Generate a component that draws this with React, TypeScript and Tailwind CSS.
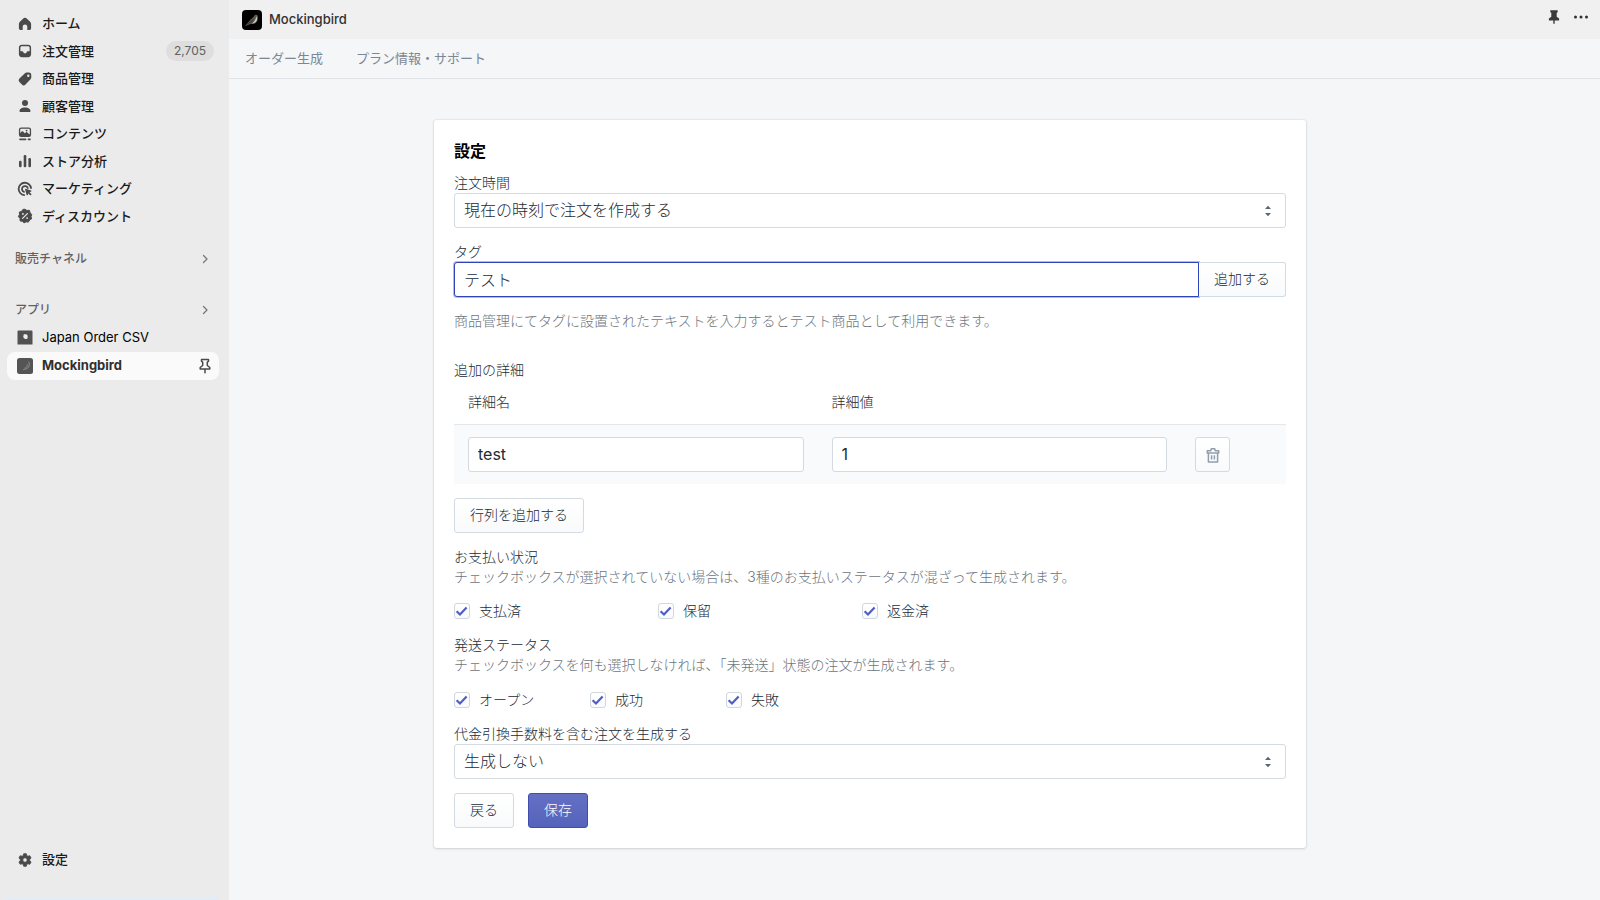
import { useState } from "react";
import type { ReactNode } from "react";

const fieldClass =
    "h-[35px] w-full rounded-[3px] border border-[#d3dae1] bg-white px-[9px] pb-0.5 text-base text-[#212b36] outline-none";
const buttonClass =
    "h-[35px] rounded-[3px] border border-[#d3dae1] bg-linear-to-b from-white to-[#f9fafb] text-sm text-[#212b36]";

const menu = [
    { label: "ホーム", icon: <HomeIcon /> },
    { label: "注文管理", icon: <OrderIcon />, count: "2,705" },
    { label: "商品管理", icon: <ProductIcon /> },
    { label: "顧客管理", icon: <PersonIcon /> },
    { label: "コンテンツ", icon: <ContentIcon /> },
    { label: "ストア分析", icon: <ChartIcon /> },
    { label: "マーケティング", icon: <TargetIcon /> },
    { label: "ディスカウント", icon: <DiscountIcon /> },
];

function App() {
    return (
        <div className="flex min-h-screen bg-[#f4f6f8] font-['Inter','Noto_Sans_CJK_JP',sans-serif] text-[#212b36]">
            <Sidebar />
            <div className="flex min-w-0 grow flex-col">
                <TopBar />
                <nav className="flex h-10 items-center gap-[33px] border-b border-[#dfe3e8] px-4 text-[13px] text-[#7b8794]">
                    <a href="#orders">オーダー生成</a>
                    <a href="#plan">プラン情報・サポート</a>
                </nav>
                <main className="mt-[41px] mr-8 mb-8 ml-[205px] max-w-[872px]">
                    <SettingsCard />
                </main>
            </div>
        </div>
    );
}

function Sidebar() {
    return (
        <aside className="sticky top-0 flex h-screen w-[229px] shrink-0 flex-col bg-[#ebebeb] text-[13px] font-medium text-[#1a1a1a]">
            <ul className="mt-2.5 grid h-[220px] grid-rows-8">
                {menu.map((item) => (
                    <li key={item.label} className="flex">
                        <a href="#menu" className="flex grow items-center gap-2 pr-[15px] pl-4">
                            {item.icon}
                            <span className="grow">{item.label}</span>
                            {item.count && (
                                <span className="rounded-full bg-[#dedede] px-2 text-xs leading-5 font-normal text-[#616161]">
                                    {item.count}
                                </span>
                            )}
                        </a>
                    </li>
                ))}
            </ul>
            <SectionButton className="mt-[15px]">販売チャネル</SectionButton>
            <SectionButton className="mt-[23px]">アプリ</SectionButton>
            <a href="#csv" className="flex h-7 items-center gap-2 pl-4 font-normal text-black">
                <CsvIcon />
                Japan Order CSV
            </a>
            <a
                href="#mockingbird"
                className="mr-2.5 ml-[7px] flex h-7 items-center gap-2 rounded-lg bg-[#fafafa] pr-1.5 pl-[9px] font-bold text-[#303030]"
            >
                <BirdTile />
                <span className="grow">Mockingbird</span>
                <PinOutlineIcon />
            </a>
            <a href="#settings" className="mt-auto mb-6 flex h-7 items-center gap-2 pl-4">
                <GearIcon />
                設定
            </a>
            <div className="mr-2.5 ml-1.5 h-0.5 rounded-t-lg bg-[#e0ecf8]"></div>
        </aside>
    );
}

function SectionButton({ className, children }: { className: string; children: ReactNode }) {
    return (
        <button
            className={`flex h-7 shrink-0 items-center justify-between pr-[19px] pl-[15px] text-xs text-[#616161] ${className}`}
        >
            {children}
            <svg viewBox="0 0 10 10" className="h-2.5 w-2.5" fill="none" stroke="#777" strokeWidth="1.3">
                <path d="M3.5 1.5L7 5L3.5 8.5" strokeLinecap="round" strokeLinejoin="round" />
            </svg>
        </button>
    );
}

function TopBar() {
    return (
        <header className="flex h-[39px] items-center bg-[#f0f0f0] pr-[11px] pl-[13px] text-[13px] font-medium text-[#303030]">
            <BirdLogo />
            <span className="ml-[7px] grow">Mockingbird</span>
            <button aria-label="Pin" className="mr-[11px] mb-1.5">
                <PinIcon />
            </button>
            <button aria-label="More" className="mb-1.5">
                <DotsIcon />
            </button>
        </header>
    );
}

function SettingsCard() {
    const [tag, setTag] = useState("テスト");
    const [rows, setRows] = useState([{ name: "test", value: "1" }]);

    const update = (index: number, key: "name" | "value", text: string) => {
        setRows(rows.map((row, i) => (i === index ? { ...row, [key]: text } : row)));
    };

    return (
        <form
            onSubmit={(e) => e.preventDefault()}
            className="rounded-[3px] bg-white p-5 text-sm leading-5 font-light shadow-[0_0_0_1px_rgba(63,63,68,0.06),0_1px_3px_0_rgba(63,63,68,0.15)]"
        >
            <h2 className="mb-[11px] text-base leading-[22px] font-bold text-black">設定</h2>

            <label htmlFor="time" className="block">注文時間</label>
            <Select id="time" options={["現在の時刻で注文を作成する"]} />

            <label htmlFor="tag" className="mt-3.5 block">タグ</label>
            <div className="flex">
                <input
                    id="tag"
                    type="text"
                    value={tag}
                    onChange={(e) => setTag(e.target.value)}
                    className="h-[35px] min-w-0 grow rounded-l-[3px] border border-[#2f43bd] bg-white px-[9px] pb-0.5 text-base text-[#212b36] shadow-[0_0_0_1px_rgba(92,106,196,0.45)] outline-none"
                />
                <button className="h-[35px] rounded-r-[3px] border border-l-0 border-[#d3dae1] bg-linear-to-b from-white to-[#f9fafb] px-[15px] pb-0.5 text-sm">
                    追加する
                </button>
            </div>
            <p className="mt-3.5 text-[#6c757e]">
                商品管理にてタグに設置されたテキストを入力するとテスト商品として利用できます。
            </p>

            <h3 className="mt-[29px]">追加の詳細</h3>
            <table className="w-full table-fixed">
                <thead>
                    <tr className="border-b border-[#e4e7eb] text-left">
                        <th className="px-3.5 py-3 font-light">詳細名</th>
                        <th className="px-3.5 py-3 font-light">詳細値</th>
                        <th className="w-[105px]"></th>
                    </tr>
                </thead>
                <tbody>
                    {rows.map((row, index) => (
                        <tr key={index} className="bg-[#f9fafc]">
                            <td className="px-3.5 py-3">
                                <input
                                    type="text"
                                    aria-label="詳細名"
                                    value={row.name}
                                    onChange={(e) => update(index, "name", e.target.value)}
                                    className={`${fieldClass} block font-normal`}
                                />
                            </td>
                            <td className="px-3.5 py-3">
                                <input
                                    type="text"
                                    aria-label="詳細値"
                                    value={row.value}
                                    onChange={(e) => update(index, "value", e.target.value)}
                                    className={`${fieldClass} block font-normal`}
                                />
                            </td>
                            <td className="px-3.5 py-3">
                                <button
                                    type="button"
                                    aria-label="削除"
                                    onClick={() => setRows(rows.filter((_, i) => i !== index))}
                                    className={`${buttonClass} flex w-[35px] items-center justify-center`}
                                >
                                    <TrashIcon />
                                </button>
                            </td>
                        </tr>
                    ))}
                </tbody>
            </table>
            <button
                type="button"
                onClick={() => setRows([...rows, { name: "", value: "" }])}
                className={`${buttonClass} mt-3.5 block px-[15px] pb-0.5`}
            >
                行列を追加する
            </button>

            <h3 className="mt-3.5">お支払い状況</h3>
            <p className="text-[#6c757e]">
                チェックボックスが選択されていない場合は、3種のお支払いステータスが混ざって生成されます。
            </p>
            <div className="mt-3.5 mr-4 grid grid-cols-4">
                <Checkbox label="支払済" />
                <Checkbox label="保留" />
                <Checkbox label="返金済" />
            </div>

            <h3 className="mt-3.5">発送ステータス</h3>
            <p className="text-[#6c757e]">
                チェックボックスを何も選択しなければ、「未発送」状態の注文が生成されます。
            </p>
            <div className="mt-[15px] mr-4 grid grid-cols-6">
                <Checkbox label="オープン" />
                <Checkbox label="成功" />
                <Checkbox label="失敗" />
            </div>

            <label htmlFor="fee" className="mt-3.5 block">代金引換手数料を含む注文を生成する</label>
            <Select id="fee" options={["生成しない"]} />

            <div className="mt-3.5 flex gap-3.5">
                <button type="button" className={`${buttonClass} px-[15px] pb-0.5`}>戻る</button>
                <button className="h-[35px] rounded-[3px] border border-[#3f4eae] bg-linear-to-b from-[#6570c4] to-[#5563bb] px-[15px] pb-0.5 text-sm text-white">
                    保存
                </button>
            </div>
        </form>
    );
}

function Select({ id, options }: { id: string; options: string[] }) {
    return (
        <div className="relative">
            <select id={id} className={`${fieldClass} block appearance-none`}>
                {options.map((option) => (
                    <option key={option}>{option}</option>
                ))}
            </select>
            <svg viewBox="0 0 8 12" className="pointer-events-none absolute top-3 right-3.5 h-3 w-2" fill="#5a6773">
                <path d="M1 4L4 0.8L7 4Z M1 8L4 11.2L7 8Z" />
            </svg>
        </div>
    );
}

function Checkbox({ label }: { label: string }) {
    return (
        <label className="flex items-center gap-[9px]">
            <span className="relative flex">
                <input
                    type="checkbox"
                    defaultChecked
                    className="peer h-4 w-4 appearance-none rounded-[3px] border border-[#d0d7de] bg-linear-to-b from-white to-[#f9fafb]"
                />
                <svg
                    viewBox="0 0 16 16"
                    className="pointer-events-none absolute inset-0 hidden h-4 w-4 peer-checked:block"
                    fill="none"
                    stroke="#4f5ec4"
                    strokeWidth="2.2"
                >
                    <path d="M2.6 8.2L6 11.5L12.6 4.6" />
                </svg>
            </span>
            {label}
        </label>
    );
}

function Icon({ children }: { children: ReactNode }) {
    return (
        <svg viewBox="0 0 18 18" className="h-[18px] w-[18px] shrink-0" fill="#4a4a4a">
            {children}
        </svg>
    );
}

function HomeIcon() {
    return (
        <Icon>
            <path d="M7.9 3.1a1.7 1.7 0 0 1 2.2 0l3.8 3.3c.8.7 1.2 1.6 1.2 2.6v4.3c0 1-.7 1.7-1.7 1.7h-2.1v-3.2a2.3 2.3 0 0 0-4.6 0V15H4.6c-1 0-1.7-.7-1.7-1.7V9c0-1 .4-1.9 1.2-2.6z" />
        </Icon>
    );
}

function OrderIcon() {
    return (
        <Icon>
            <path
                fillRule="evenodd"
                d="M6 2.800h6a3.100 3.100 0 0 1 3.100 3.100v6.200a3.100 3.100 0 0 1-3.100 3.100H6a3.100 3.100 0 0 1-3.100-3.100v-6.200a3.100 3.100 0 0 1 3.100-3.100zM6 4.300c-1 0-1.600.7-1.600 1.600v3.400h2c.4 0 .7.200.9.600l.5 1c.1.200.3.300.5.300h1.400c.2 0 .4-.1.500-.3l.5-1c.2-.4.500-.6.900-.6h2V5.900c0-.9-.6-1.600-1.600-1.600z"
            />
        </Icon>
    );
}

function ProductIcon() {
    return (
        <Icon>
            <path
                fillRule="evenodd"
                d="M8.700 3.400c.6-.5 1.200-.8 2-.8h2.200a2.400 2.400 0 0 1 2.400 2.400v2.300c0 .7-.3 1.400-.8 1.900l-5 5.300a2.500 2.500 0 0 1-3.600 0L3.400 12a2.500 2.500 0 0 1 0-3.500zM12.300 6.900a1.200 1.200 0 1 0 0-2.400a1.200 1.200 0 0 0 0 2.400z"
            />
        </Icon>
    );
}

function PersonIcon() {
    return (
        <Icon>
            <circle cx="9" cy="6" r="3" />
            <path d="M3.5 14c0-2.200 2.400-3.600 5.500-3.600s5.500 1.400 5.500 3.600c0 .7-.5 1.100-1.200 1.100H4.700c-.7 0-1.200-.4-1.200-1.100z" />
        </Icon>
    );
}

function ContentIcon() {
    return (
        <Icon>
            <path
                fillRule="evenodd"
                d="M5.200 2.500h7.600a2.300 2.300 0 0 1 2.300 2.300v4.900a2.300 2.300 0 0 1-2.300 2.300H5.200a2.300 2.300 0 0 1-2.300-2.300V4.800a2.300 2.300 0 0 1 2.300-2.300zM5.400 3.800c-.7 0-1.200.5-1.200 1.200v2.900l1.500-1.300c.4-.4 1-.4 1.400 0l1.700 1.700 1-.9c.5-.4 1-.4 1.500 0l2.500 2V5c0-.7-.5-1.200-1.200-1.200z"
            />
            <circle cx="10.6" cy="5.6" r="0.9" />
            <rect x="3.2" y="13.6" width="7.2" height="1.7" rx="0.8" />
            <rect x="11.6" y="13.600" width="3.200" height="1.700" rx="0.800" />
        </Icon>
    );
}

function ChartIcon() {
    return (
        <Icon>
            <rect x="3" y="8.8" width="2.6" height="6.4" rx="1.2" />
            <rect x="7.7" y="3" width="2.6" height="12.2" rx="1.2" />
            <rect x="12.4" y="6" width="2.6" height="9.2" rx="1.2" />
        </Icon>
    );
}

function TargetIcon() {
    return (
        <Icon>
            <g fill="none" stroke="#4a4a4a" strokeWidth="1.8" strokeLinecap="round">
                <path d="M15 8.200A6.200 6.200 0 1 0 8.200 15.100" />
                <path d="M11.800 8A3 3 0 1 0 8 11.900" />
            </g>
            <path d="M9 9.300c-.1-.4.2-.7.6-.6l5.500 1.800c.5.200.5.900 0 1.100l-1.500.7 1.700 1.700c.6.600-.6 1.800-1.200 1.200l-1.700-1.700-.7 1.500c-.2.500-.9.500-1.100-.1z" />
        </Icon>
    );
}

function DiscountIcon() {
    return (
        <Icon>
            <path
                d="M9 2.200L10.900 3.500L13.400 3.300L14 5.800L15.800 7.500L15 9.400L15.600 11.800L13.600 12.900L12.400 15.100L10.100 14.800L8 15.900L6.500 14.300L4.100 13.900L4 11.500L2.400 9.600L3.500 7.500L3.300 5.100L5.600 4.400L6.900 2.400Z"
                stroke="#4a4a4a"
                strokeWidth="1"
                strokeLinejoin="round"
            />
            <path d="M6.600 11.400L11.400 6.600" stroke="#ebebeb" strokeWidth="1.200" strokeLinecap="round" />
            <circle cx="6.900" cy="6.900" r="0.900" fill="#ebebeb" />
            <circle cx="11.100" cy="11.100" r="0.900" fill="#ebebeb" />
        </Icon>
    );
}

function GearIcon() {
    return (
        <Icon>
            <path
                fillRule="evenodd"
                d="M7.700 2.700h2.600l.5 1.900 1.100.6 1.900-.5 1.300 2.300-1.400 1.400v1.200l1.400 1.400-1.300 2.300-1.900-.5-1.100.6-.5 1.900H7.700l-.5-1.900-1.100-.6-1.900.5-1.300-2.300 1.400-1.400V8.400L2.900 7l1.300-2.300 1.900.5 1.100-.6zM9 11.200a2.200 2.200 0 1 0 0-4.400a2.200 2.200 0 0 0 0 4.400z"
                stroke="#4a4a4a"
                strokeWidth="0.8"
                strokeLinejoin="round"
            />
        </Icon>
    );
}

function CsvIcon() {
    return (
        <Icon>
            <path d="M2.500 1.500h13a1 1 0 0 1 1 1V15.500H1.500V2.500a1 1 0 0 1 1-1z" fill="#525252" />
            <path d="M7.800 5.300h2.500l1.300 1.300v2.600l-1.200.8H9L7.200 8.200z" fill="#efefef" />
        </Icon>
    );
}

function BirdTile() {
    return (
        <Icon>
            <rect x="1" y="1" width="16" height="16" rx="2.500" fill="#555" />
            <path d="M12.700 4.700c1.200 2.700.6 5.800-1.900 6.900-1.100.5-2.500.4-3.600 1.100" stroke="#909090" strokeWidth="1" fill="none" />
            <path d="M11.400 7.200c.2 1.800-.9 3.300-2.900 3.900" stroke="#787878" strokeWidth="1.200" fill="none" />
        </Icon>
    );
}

function BirdLogo() {
    return (
        <svg viewBox="0 0 20 20" className="h-5 w-5">
            <rect width="20" height="20" rx="4" fill="#000" />
            <path d="M3 16.300L7.500 10.800C9 8.800 10.600 7.800 11.800 6.500c.6-1.400 1.600-2 2.700-1.700.8.200 1.200.7 1.300 1.400l.7.400-.7.300c.5 2.300-.2 4.600-2.200 6-1.500 1.100-3.500 1.100-5.100 1.200z" fill="#5d5952" />
            <path d="M14.400 6.300c1.200 2.300.6 5-1.600 6.400-.9.500-1.900.7-2.900.8 2.300-1.600 3.900-4 4.500-7.200z" fill="#d3cec2" />
            <path d="M4 15.300l5.300-4.700 3.200-2.300-2.500 4.200z" fill="#45423d" />
        </svg>
    );
}

function PinOutlineIcon() {
    return (
        <svg viewBox="0 0 16 16" className="h-4 w-4" fill="none" stroke="#4a4a4a" strokeWidth="1.5" strokeLinejoin="round" strokeLinecap="round">
            <path d="M4.500 1.500h7v1.600l-1.200 1.200v3.200l2.500 2v1.600H3.200V9.500l2.500-2V4.300L4.500 3.100zM8 11.300v3.500" />
        </svg>
    );
}

function PinIcon() {
    return (
        <svg viewBox="0 0 16 16" className="h-4 w-4" fill="#3a3a3a">
            <path d="M4.300 1.200h7.400v2.100l-1 .5v4l2.400 1.800v1.900H8.700v3.300H7.300v-3.300H2.900V9.600l2.400-1.800v-4l-1-.5z" />
        </svg>
    );
}

function DotsIcon() {
    return (
        <svg viewBox="0 0 16 16" className="h-4 w-4" fill="#303030">
            <circle cx="2.500" cy="8" r="1.500" />
            <circle cx="8" cy="8" r="1.500" />
            <circle cx="13.500" cy="8" r="1.500" />
        </svg>
    );
}

function TrashIcon() {
    return (
        <svg viewBox="0 0 16 16" className="h-4 w-4" fill="none" stroke="#919eab" strokeWidth="1.500">
            <path d="M2.300 6V3.700H5.700L6.300 1.800H9.700L10.300 3.700H13.700V6ZM3.400 6V15H12.600V6M6.600 8.300V12.600M9.400 8.300V12.600" strokeLinejoin="round" />
        </svg>
    );
}

export default App;
